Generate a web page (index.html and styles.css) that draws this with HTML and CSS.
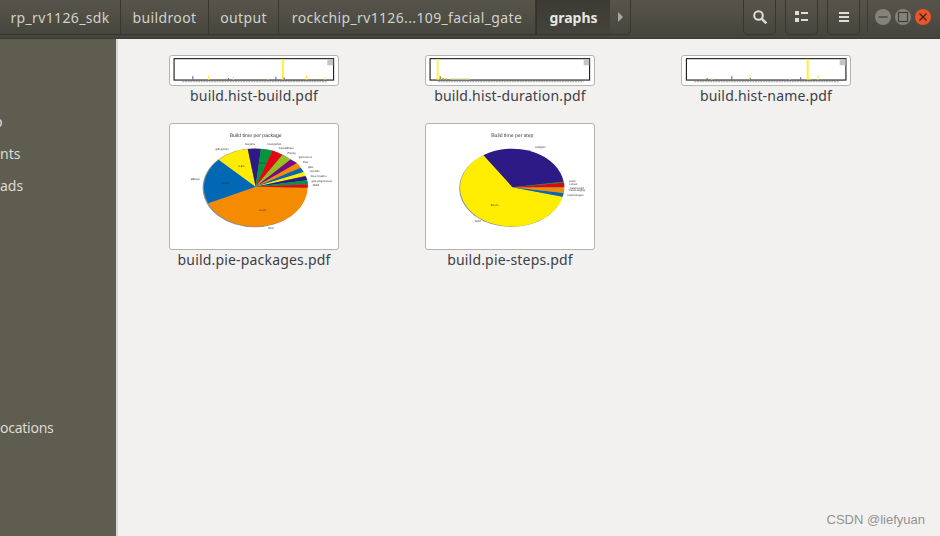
FILE: index.html
```html
<!DOCTYPE html>
<html lang="en">
<head>
<meta charset="utf-8">
<title>graphs</title>
<link rel="stylesheet" href="styles.css">
</head>
<body>
<header class="bar">
  <nav class="crumbs">
    <span class="crumb c1">rp_rv1126_sdk</span>
    <span class="crumb c2">buildroot</span>
    <span class="crumb c3">output</span>
    <span class="crumb c4">rockchip_rv1126...109_facial_gate</span>
    <span class="crumb active">graphs</span>
    <span class="crumb more"><svg width="7" height="10" viewBox="0 0 7 10"><path d="M1 0l5 5-5 5z" fill="#a9a79f"/></svg></span>
  </nav>
  <div class="tools">
    <span class="tool"><svg width="16" height="16" viewBox="0 0 16 16"><circle cx="6.5" cy="6.5" r="4.3" fill="none" stroke="#dedcd6" stroke-width="2"/><path d="M9.8 9.8l4.6 4.6" stroke="#dedcd6" stroke-width="2.4"/></svg></span>
    <span class="tool"><svg width="14" height="12" viewBox="0 0 14 12"><path d="M0 0h4v4H0zM6 1h7v2H6zM0 7h4v4H0zM6 8h7v2H6z" fill="#dedcd6"/></svg></span>
    <span class="tool"><svg width="12" height="12" viewBox="0 0 12 12"><path d="M1 1h10v2H1zM1 5h10v2H1zM1 9h10v2H1z" fill="#dedcd6"/></svg></span>
    <span class="divider"></span>
    <span class="win win-gray"><svg width="16" height="16" viewBox="0 0 16 16"><path d="M3.500 8h9" stroke="#3f3e38" stroke-width="1.200"/></svg></span>
    <span class="win win-gray"><svg width="16" height="16" viewBox="0 0 16 16"><rect x="3.500" y="3.500" width="9" height="9" fill="none" stroke="#3f3e38" stroke-width="1.200"/></svg></span>
    <span class="win win-close"><svg width="16" height="16" viewBox="0 0 16 16"><path d="M4.500 4.500l7 7M11.500 4.500l-7 7" stroke="#3a2318" stroke-width="1.300"/></svg></span>
  </div>
</header>
<div class="body">
  <aside class="side">
    <span class="place p1">p</span>
    <span class="place p2">nts</span>
    <span class="place p3">ads</span>
    <span class="place p4">ocations</span>
  </aside>
  <main class="files">
    <figure class="file">
      <div class="frame wide"><svg class="thumb" viewBox="30 17 505 88">
        <rect x="40" y="25" width="484" height="65" fill="#fff" stroke="#222" stroke-width="3.500"/>
        <path d="M65 94.500h440" stroke="#b4b4b4" stroke-width="4" stroke-dasharray="6 2"/>
        <path d="M505 27h18v18h-18z" fill="#c4c4c4"/>
        <path d="M370 26v63" stroke="#ffee33" stroke-width="6"/>
        <path d="M145 76v13M220 81v8M442 75v14M498 82v7M325 85v4" stroke="#ffee55" stroke-width="4"/>
        <path d="M97 78v11M205 84v5M349 80v9M374 82v7" stroke="#5a4fa0" stroke-width="3"/>
      </svg></div>
      <figcaption>build.hist-build.pdf</figcaption>
    </figure>
    <figure class="file">
      <div class="frame wide"><svg class="thumb" viewBox="18 17 505 88">
        <rect x="28" y="25" width="484" height="65" fill="#fff" stroke="#222" stroke-width="3.500"/>
        <path d="M52 94.500h442" stroke="#b4b4b4" stroke-width="4" stroke-dasharray="6 2"/>
        <path d="M494 27h17v18h-17z" fill="#c4c4c4"/>
        <path d="M51 26v63" stroke="#fff05a" stroke-width="6"/>
        <path d="M59 78v11M68 84v5M76 85v4" stroke="#b9a92a" stroke-width="5"/>
        <path d="M90 87h60" stroke="#ddd78a" stroke-width="3"/>
      </svg></div>
      <figcaption>build.hist-duration.pdf</figcaption>
    </figure>
    <figure class="file">
      <div class="frame wide"><svg class="thumb" viewBox="20 17 505 88">
        <rect x="31" y="25" width="484" height="65" fill="#fff" stroke="#222" stroke-width="3.500"/>
        <path d="M55 94.500h440" stroke="#b4b4b4" stroke-width="4" stroke-dasharray="6 2"/>
        <path d="M496 27h18v18h-18z" fill="#c4c4c4"/>
        <path d="M399 26v63" stroke="#ffee33" stroke-width="6"/>
        <path d="M224 76v13M108 83v6M430 75v14M407 84v5M345 85v4" stroke="#ffee55" stroke-width="4"/>
        <path d="M94 84v5M169 78v11M225 84v5M378 81v8" stroke="#5a4fa0" stroke-width="3"/>
      </svg></div>
      <figcaption>build.hist-name.pdf</figcaption>
    </figure>
    <figure class="file">
      <div class="frame tall"><svg class="thumb" viewBox="12 10 510 378">
        <text class="t-title" x="272" y="48">Build time per package</text>
        <ellipse cx="269" cy="203" rx="158" ry="120" fill="#8f8f8f"/>
        <path d="M272 200L430 203A158 120 0 0 1 128 250Z" fill="#f58b00"/>
        <path d="M272 200L128 250A158 120 0 0 1 160 118Z" fill="#0068b4"/>
        <path d="M272 200L160 118A158 120 0 0 1 248 85Z" fill="#ffed00"/>
        <path d="M272 200L248 85A158 120 0 0 1 288 85Z" fill="#2e1a87"/>
        <path d="M272 200L288 85A158 120 0 0 1 323 90Z" fill="#009640"/>
        <path d="M272 200L323 90A158 120 0 0 1 353 103Z" fill="#e30613"/>
        <path d="M272 200L353 103A158 120 0 0 1 378 117Z" fill="#95c11f"/>
        <path d="M272 200L378 117A158 120 0 0 1 398 128Z" fill="#7b0a82"/>
        <path d="M272 200L398 128A158 120 0 0 1 409 142Z" fill="#f58b00"/>
        <path d="M272 200L409 142A158 120 0 0 1 418 155Z" fill="#0068b4"/>
        <path d="M272 200L418 155A158 120 0 0 1 424 167Z" fill="#ffed00"/>
        <path d="M272 200L424 167A158 120 0 0 1 429 180Z" fill="#2e1a87"/>
        <path d="M272 200L429 180A158 120 0 0 1 431 192Z" fill="#009640"/>
        <path d="M272 200L431 192A158 120 0 0 1 430 203Z" fill="#e30613"/>
        <text class="t-label" x="292" y="272">40.6%</text>
        <text class="t-label" x="180" y="190">18.0%</text>
        <text class="t-label" x="229" y="139">9.8%</text>
        <text class="t-label" x="270" y="129">3.7%</text>
        <text class="t-label" x="292" y="132">2.9%</text>
        <text class="t-label" x="319" y="327">other</text>
        <text class="t-label" x="89" y="178">qt5base</text>
        <text class="t-label" x="170" y="87">gdb-python</text>
        <text class="t-label" x="255" y="72">busybox</text>
        <text class="t-label" x="329" y="74">host-python</text>
        <text class="t-label" x="365" y="85">host-qt5base</text>
        <text class="t-label" x="381" y="99">ffmpeg</text>
        <text class="t-label" x="423" y="112">gstreamer1</text>
        <text class="t-label" x="424" y="128">libav</text>
        <text class="t-label" x="439" y="142">glibc</text>
        <text class="t-label" x="451" y="156">coreutils</text>
        <text class="t-label" x="463" y="170">linux-headers</text>
        <text class="t-label" x="473" y="184">gst1-plugins-base</text>
        <text class="t-label" x="455" y="196">libzlib</text>
      </svg></div>
      <figcaption>build.pie-packages.pdf</figcaption>
    </figure>
    <figure class="file">
      <div class="frame tall"><svg class="thumb" viewBox="14 10 510 378">
        <text class="t-title" x="276" y="48">Build time per step</text>
        <ellipse cx="273" cy="204" rx="158" ry="118" fill="#8f8f8f"/>
        <path d="M276 201L432 185A158 118 0 0 0 188 104Z" fill="#2e1a87"/>
        <path d="M276 201L188 104A158 118 0 1 0 429 230Z" fill="#ffed00"/>
        <path d="M276 201L429 230A158 118 0 0 0 432 219Z" fill="#0068b4"/>
        <path d="M276 201L432 219A158 118 0 0 0 434 205Z" fill="#f58b00"/>
        <path d="M276 201L434 205A158 118 0 0 0 434 201Z" fill="#95c11f"/>
        <path d="M276 201L434 201A158 118 0 0 0 433 187Z" fill="#e30613"/>
        <path d="M276 201L433 187A158 118 0 0 0 432 184Z" fill="#009640"/>
        <text class="t-label" x="314" y="136">34.5%</text>
        <text class="t-label" x="222" y="259">55.6%</text>
        <text class="t-label" x="171" y="307">build</text>
        <text class="t-label" x="361" y="82">configure</text>
        <text class="t-label" x="458" y="184">patch</text>
        <text class="t-label" x="461" y="193">extract</text>
        <text class="t-label" x="472" y="206">install-target</text>
        <text class="t-label" x="472" y="212">install-staging</text>
        <text class="t-label" x="468" y="228">install-images</text>
      </svg></div>
      <figcaption>build.pie-steps.pdf</figcaption>
    </figure>
  </main>
</div>
<span class="mark">CSDN @liefyuan</span>
</body>
</html>
```
FILE: styles.css
```css
* { box-sizing: border-box; }
html, body { margin: 0; height: 100%; overflow: hidden; }
body { width: 940px; height: 536px; position: relative; background: #f2f1f0; font-family: "Noto Sans", "Open Sans", sans-serif; }

.bar { height: 39px; display: flex; justify-content: space-between; padding-bottom: 4px; background: linear-gradient(#57554b, #45443c); border-bottom: 1px solid #3c3b34; }
.crumbs { display: flex; height: 35px; }
.crumb { display: flex; align-items: center; justify-content: center; font-size: 14px; letter-spacing: .36px; color: #d0d2cc; border-right: 1px solid #37362f; border-bottom: 1px solid #37362f; }
.c1 { width: 121px; }
.c2 { width: 88px; }
.c3 { width: 70px; }
.c4 { width: 257px; }
.active { width: 74px; font-weight: 700; letter-spacing: 0; color: #e8e6e1; background: linear-gradient(#3c3b34, #44433b); border-left: 1px solid #33322c; border-right: 0; }
.more { width: 21px; border-radius: 0 0 5px 0; }

.tools { display: flex; align-items: flex-start; padding-right: 7px; }
.tool { width: 33px; height: 35px; margin-right: 9px; display: flex; align-items: center; justify-content: center; border: 1px solid #37362f; border-top: 0; border-radius: 0 0 5px 5px; }
.divider { width: 1px; height: 32px; background: #3c3b34; margin: 0 5px 0 -2px; }
.win { width: 16px; height: 16px; margin: 9px 2px 0; border-radius: 50%; display: flex; box-sizing: content-box; }
.win-gray { background: #84827a; }
.win-close { background: #e9562a; }

.body { display: flex; height: 497px; }
.side { width: 118px; position: relative; background: #5f5c50; border-right: 2px solid #d9d7d4; color: #dcdad4; font-size: 14px; }
.place { position: absolute; white-space: nowrap; line-height: 18px; }
.p1 { left: -6px; top: 74px; }
.p2 { left: 0; top: 106px; }
.p3 { left: 0; top: 138px; }
.p4 { left: 0; top: 380px; letter-spacing: -.25px; }

.files { flex: 1; display: grid; grid-template-columns: repeat(3, 256px); grid-auto-rows: min-content; row-gap: 18px; padding: 16px 0 0 8px; align-content: start; }
.file { margin: 0; display: flex; flex-direction: column; align-items: center; }
.file figcaption { font-size: 14px; line-height: 19px; letter-spacing: .18px; color: #3c4048; white-space: nowrap; }
.frame { width: 170px; background: #fff; border: 1px solid #b5b3ae; border-radius: 3px; overflow: hidden; }
.wide { height: 31px; }
.tall { height: 127px; }
.thumb { display: block; width: 100%; height: 100%; filter: blur(.45px); }
.t-title { font: 15.500px "Liberation Sans", sans-serif; fill: #333; text-anchor: middle; text-rendering: geometricPrecision; }
.t-label { font: 8px "Liberation Sans", sans-serif; fill: #333; text-anchor: middle; text-rendering: geometricPrecision; }

.mark { position: absolute; right: 15px; bottom: 9px; font: 13px "Liberation Sans", sans-serif; color: #929292; }
```
